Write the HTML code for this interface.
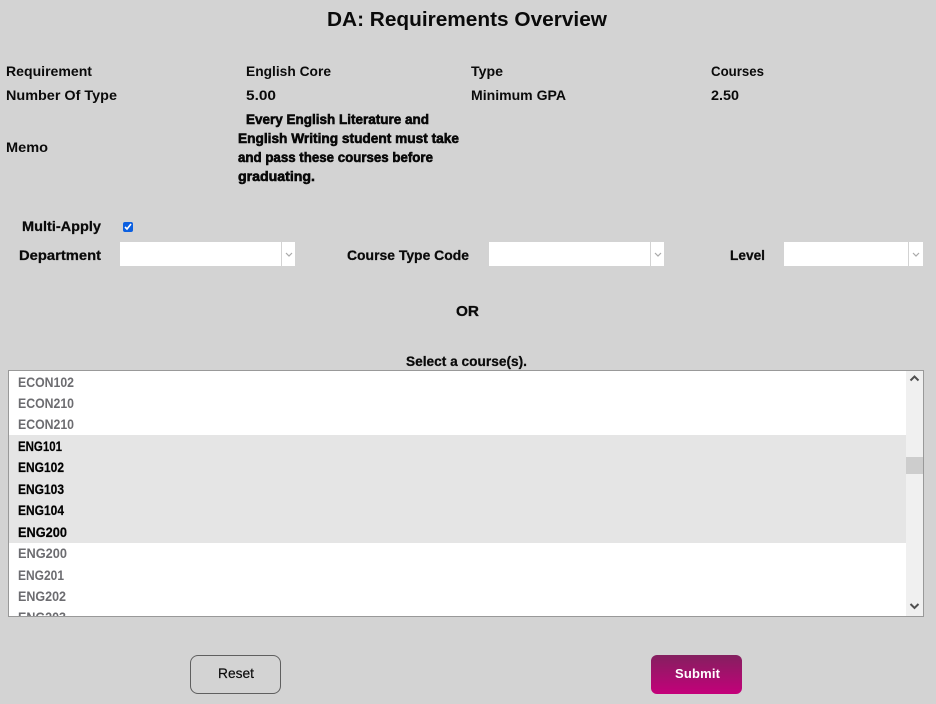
<!DOCTYPE html>
<html><head><meta charset="utf-8"><title>DA: Requirements Overview</title>
<style>
html,body{margin:0;padding:0;width:936px;height:704px;overflow:hidden;background:#d3d3d3}
body{position:relative;font-family:"Liberation Sans",sans-serif}
.b{position:absolute;box-sizing:border-box}
.sel{background:#fff;height:24px;top:242px}
.sel i{position:absolute;top:0;bottom:0;width:1px;background:#d3d3d3}
.sel svg{position:absolute;top:10px;width:8px;height:5px}
svg.t{position:absolute;left:0;top:0}
svg text{font-family:"Liberation Sans",sans-serif;fill:#0a0a0a}
.m{font-size:14px;font-weight:700}
.l{font-size:14px;font-weight:700;stroke:#0a0a0a;stroke-width:.25px}
.h{font-size:14px;font-weight:700;stroke:#000;stroke-width:.55px}
.g{font-size:13.5px;font-weight:700;fill:#6c6c70}
.s{font-size:13.5px;font-weight:700;fill:#000;stroke:#000;stroke-width:.2px}
</style></head>
<body>
<div class="b sel" style="left:120px;width:175px"><i style="left:161px"></i><svg style="left:165px" viewBox="0 0 8 5"><path d="M1 1l3 3 3-3" fill="none" stroke="#aaa" stroke-width="1.2"/></svg></div>
<div class="b sel" style="left:489px;width:175px"><i style="left:161px"></i><svg style="left:165px" viewBox="0 0 8 5"><path d="M1 1l3 3 3-3" fill="none" stroke="#aaa" stroke-width="1.2"/></svg></div>
<div class="b sel" style="left:784px;width:139px"><i style="left:124px"></i><svg style="left:128px" viewBox="0 0 8 5"><path d="M1 1l3 3 3-3" fill="none" stroke="#aaa" stroke-width="1.2"/></svg></div>
<input type="checkbox" checked style="position:absolute;left:123px;top:222px;width:10px;height:10px;margin:0;accent-color:#0b5fe0">

<div class="b" style="left:8px;top:370px;width:916px;height:247px;border:1px solid #999;background:#fff;overflow:hidden">
  <div class="b" style="left:0;top:64px;width:897px;height:108px;background:#e5e5e5"></div>
  <div class="b" style="left:897px;top:0;width:17px;height:245px;background:#f0f0f0"></div>
  <div class="b" style="left:897px;top:86px;width:17px;height:17px;background:#cdcdcd"></div>
  <svg style="position:absolute;left:897px;top:0" width="17" height="245" viewBox="0 0 17 245"><path d="M4.500 9.500L8.500 5.500l4 4M4.500 233l4 4 4-4" fill="none" stroke="#505050" stroke-width="2"/></svg>
  <svg class="t" width="897" height="245" viewBox="9 371 897 245" style="left:0;top:0">
    <text class="g" x="18" y="387" textLength="56" lengthAdjust="spacingAndGlyphs">ECON102</text>
    <text class="g" x="18" y="408" textLength="56" lengthAdjust="spacingAndGlyphs">ECON210</text>
    <text class="g" x="18" y="429" textLength="56" lengthAdjust="spacingAndGlyphs">ECON210</text>
    <text class="s" x="18" y="451" textLength="44" lengthAdjust="spacingAndGlyphs">ENG101</text>
    <text class="s" x="18" y="472" textLength="46" lengthAdjust="spacingAndGlyphs">ENG102</text>
    <text class="s" x="18" y="494" textLength="46" lengthAdjust="spacingAndGlyphs">ENG103</text>
    <text class="s" x="18" y="515" textLength="46" lengthAdjust="spacingAndGlyphs">ENG104</text>
    <text class="s" x="18" y="537" textLength="49" lengthAdjust="spacingAndGlyphs">ENG200</text>
    <text class="g" x="18" y="558" textLength="49" lengthAdjust="spacingAndGlyphs">ENG200</text>
    <text class="g" x="18" y="580" textLength="46" lengthAdjust="spacingAndGlyphs">ENG201</text>
    <text class="g" x="18" y="601" textLength="48" lengthAdjust="spacingAndGlyphs">ENG202</text>
    <text class="g" x="18" y="622" textLength="48" lengthAdjust="spacingAndGlyphs">ENG203</text>
  </svg>
</div>

<div class="b" style="left:190px;top:655px;width:91px;height:39px;border:1px solid #5f5f5f;border-radius:8px"></div>
<div class="b" style="left:651px;top:655px;width:91px;height:39px;border-radius:6px;background:linear-gradient(#84205f,#c4007a)"></div>

<svg class="t" width="936" height="704" viewBox="0 0 936 704">
  <text x="327" y="26" font-size="20" font-weight="700" textLength="280" lengthAdjust="spacingAndGlyphs">DA: Requirements Overview</text>

  <text class="m" x="6" y="76" textLength="86" lengthAdjust="spacingAndGlyphs">Requirement</text>
  <text class="m" x="246" y="76" textLength="85" lengthAdjust="spacingAndGlyphs">English Core</text>
  <text class="m" x="471" y="76" textLength="32" lengthAdjust="spacingAndGlyphs">Type</text>
  <text class="m" x="711" y="76" textLength="53" lengthAdjust="spacingAndGlyphs">Courses</text>
  <text class="m" x="6" y="100" textLength="111" lengthAdjust="spacingAndGlyphs">Number Of Type</text>
  <text class="m" x="246" y="100" textLength="30" lengthAdjust="spacingAndGlyphs">5.00</text>
  <text class="m" x="471" y="100" textLength="95" lengthAdjust="spacingAndGlyphs">Minimum GPA</text>
  <text class="m" x="711" y="100" textLength="28" lengthAdjust="spacingAndGlyphs">2.50</text>
  <text class="m" x="6" y="152" textLength="42" lengthAdjust="spacingAndGlyphs">Memo</text>

  <text class="h" x="246" y="124" textLength="183" lengthAdjust="spacingAndGlyphs">Every English Literature and</text>
  <text class="h" x="238" y="143" textLength="221" lengthAdjust="spacingAndGlyphs">English Writing student must take</text>
  <text class="h" x="238" y="162" textLength="195" lengthAdjust="spacingAndGlyphs">and pass these courses before</text>
  <text class="h" x="238" y="181" textLength="77" lengthAdjust="spacingAndGlyphs">graduating.</text>

  <text class="l" x="22" y="231" textLength="79" lengthAdjust="spacingAndGlyphs">Multi-Apply</text>
  <text class="l" x="19" y="260" textLength="82" lengthAdjust="spacingAndGlyphs">Department</text>
  <text class="l" x="347" y="260" textLength="122" lengthAdjust="spacingAndGlyphs">Course Type Code</text>
  <text class="l" x="730" y="260" textLength="35" lengthAdjust="spacingAndGlyphs">Level</text>
  <text class="l" x="456" y="316" textLength="23" lengthAdjust="spacingAndGlyphs" style="font-size:15px">OR</text>
  <text class="l" x="406" y="366" textLength="121" lengthAdjust="spacingAndGlyphs">Select a course(s).</text>

  <text x="218" y="678" font-size="14" textLength="36" lengthAdjust="spacingAndGlyphs" style="stroke:#0a0a0a;stroke-width:.2px">Reset</text>
  <text x="675" y="678" font-size="13" font-weight="700" textLength="45" lengthAdjust="spacing" style="fill:#fff">Submit</text>
</svg>
</body></html>
